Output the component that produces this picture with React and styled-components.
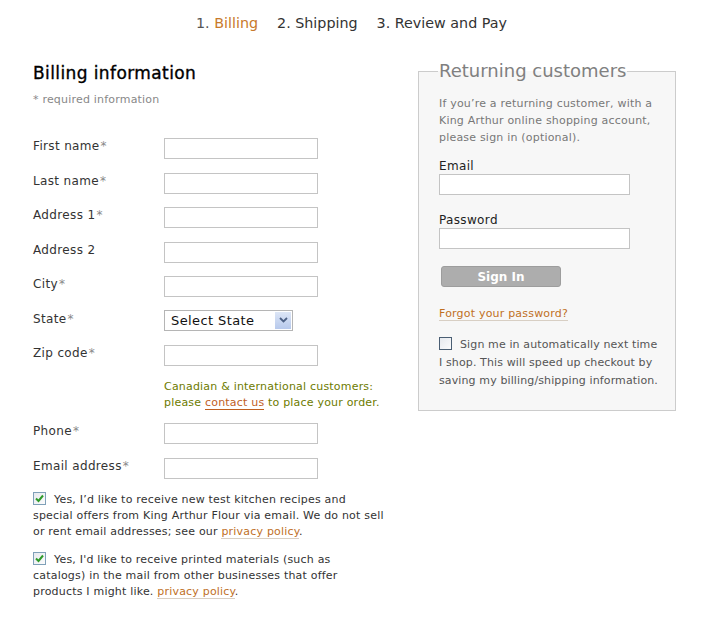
import React from "react"
import styled, { createGlobalStyle } from "styled-components"

const Global = createGlobalStyle`
  body {
    margin: 0;
    background: #fff;
    font-family: "DejaVu Sans", Verdana, sans-serif;
    color: #333;
  }
`

const Page = styled.div`
  width: 703px;
  height: 622px;
  overflow: hidden;
`

const Steps = styled.ol`
  list-style: none;
  margin: 0;
  padding: 14px 0 0 196px;
  display: flex;
  gap: 19px;
  font-size: 14.3px;
  line-height: 18px;
  color: #333;
`

const Step = styled.li`
  color: ${p => (p.active ? "#c8792b" : "#333")};
  span {
    color: #555;
  }
`

const Columns = styled.div`
  display: flex;
  padding: 0 0 0 33px;
  margin-top: 29px;
`

const Left = styled.div`
  width: 360px;
`

const Heading = styled.h2`
  margin: 2px 0 0;
  font-size: 17px;
  font-weight: normal;
  -webkit-text-stroke: 0.35px #000;
  letter-spacing: 0.4px;
  line-height: 20px;
  color: #000;
`

const Hint = styled.div`
  margin-top: 10px;
  font-size: 11px;
  color: #888;
  line-height: 14px;
  letter-spacing: 0.2px;
`

const Rows = styled.div`
  margin-top: 31px;
`

const Row = styled.div`
  display: flex;
  align-items: flex-start;
  height: ${p => p.h || 34.5}px;
`

const Label = styled.label`
  width: 131px;
  font-size: 12px;
  line-height: 15px;
  color: #333;
  padding-top: 1px;
  letter-spacing: 0.35px;
  span {
    color: #888;
    margin-left: 1px;
  }
`

const Input = styled.input`
  box-sizing: border-box;
  width: ${p => p.w || 154}px;
  height: 21px;
  border: 1px solid #c4c4c4;
  background: #fff;
  margin: 0;
  padding: 0 3px;
  display: block;
`

const SelectBox = styled.div`
  box-sizing: border-box;
  width: 129px;
  height: 21px;
  border: 1px solid #b5b5b5;
  display: flex;
  align-items: center;
  justify-content: space-between;
  padding: 0 1px 0 6px;
  font-size: 13px;
  letter-spacing: 0.4px;
  color: #111;
  background: #fff;
  margin-top: -1px;
`

const Arrow = styled.span`
  width: 16px;
  height: 17px;
  background: linear-gradient(#dde6f6, #b7c9ec);
  display: flex;
  align-items: center;
  justify-content: center;
`

const Note = styled.div`
  margin: -2px 0 0 131px;
  height: 44px;
  font-size: 11px;
  line-height: 16px;
  letter-spacing: 0.2px;
  color: #6d7b00;
`

const Link = styled.a`
  color: ${p => p.color || "#c0701f"};
  text-decoration: none;
  border-bottom: 1px solid ${p => p.line || "#d8cfc4"};
`

const Opt = styled.p`
  margin: ${p => p.mt || 0}px 0 0;
  width: 353px;
  font-size: 11px;
  line-height: 16px;
  letter-spacing: 0.2px;
  color: #333;
`

const Box = styled.span`
  display: inline-block;
  vertical-align: -2px;
  width: 11px;
  height: 11px;
  border: 1px solid ${p => (p.checked ? "#7fa0b8" : "#4a5e73")};
  background: linear-gradient(135deg, #e6e9ee, #fbfbfc);
  margin-right: 8px;
  position: relative;
  svg {
    position: absolute;
    left: 1px;
    top: 1px;
  }
`

const Fieldset = styled.fieldset`
  box-sizing: border-box;
  width: 258px;
  height: 351px;
  margin: -1px 0 0 25px;
  padding: 0 12px 0 20px;
  border: 1px solid #ccc;
  background: #f7f7f7;
`

const Legend = styled.legend`
  font-size: 18px;
  line-height: 22px;
  color: #808080;
  padding: 0 1px;
  margin-left: -1px;
`

const Intro = styled.p`
  margin: 13px 0 0;
  font-size: 11px;
  line-height: 17px;
  letter-spacing: 0.2px;
  color: #777;
`

const FieldLabel = styled.div`
  margin-top: ${p => p.mt}px;
  font-size: 12px;
  line-height: 15px;
  letter-spacing: 0.35px;
  color: #222;
`

const SignIn = styled.button`
  margin: 17px 0 0 2px;
  width: 120px;
  height: 21px;
  border: 1px solid #9d9d9d;
  border-radius: 3px;
  background: #adadad;
  color: #fff;
  font-family: "DejaVu Sans", Verdana, sans-serif;
  font-weight: bold;
  font-size: 12px;
  padding: 0;
  display: block;
`

const Forgot = styled.div`
  margin-top: 20px;
  font-size: 11px;
  line-height: 14px;
  letter-spacing: 0.2px;
`

const Remember = styled.p`
  margin: 15px 0 0;
  font-size: 11px;
  line-height: 18px;
  color: #555;
  letter-spacing: 0.12px;
`

const Check = ({ checked }) => (
  <Box checked={checked}>
    {checked && (
      <svg width="9" height="9" viewBox="0 0 9 9">
        <path d="M1 4.5 L3.5 7 L8 1.5" stroke="#2f9a2a" strokeWidth="2" fill="none" />
      </svg>
    )}
  </Box>
)

const Field = ({ label, req = true, h }) => (
  <Row h={h}>
    <Label>
      {label}
      {req && <span>*</span>}
    </Label>
    <Input />
  </Row>
)

export default function App() {
  return (
    <Page>
      <Global />
      <Steps>
        <Step active>
          <span>1. </span>Billing
        </Step>
        <Step>2. Shipping</Step>
        <Step>3. Review and Pay</Step>
      </Steps>
      <Columns>
        <Left>
          <Heading>Billing information</Heading>
          <Hint>* required information</Hint>
          <Rows>
            <Field label="First name" />
            <Field label="Last name" />
            <Field label="Address 1" />
            <Field label="Address 2" req={false} />
            <Field label="City" />
            <Row>
              <Label>
                State<span>*</span>
              </Label>
              <SelectBox>
                Select State
                <Arrow>
                  <svg width="9" height="6" viewBox="0 0 9 6">
                    <path d="M1 1 L4.5 4.5 L8 1" stroke="#4d6185" strokeWidth="1.8" fill="none" />
                  </svg>
                </Arrow>
              </SelectBox>
            </Row>
            <Field label="Zip code" h={36} />
            <Note>
              Canadian &amp; international customers:
              <br />
              please{" "}
              <Link color="#c0601f" line="#c0601f">
                contact us
              </Link>{" "}
              to place your order.
            </Note>
            <Field label="Phone" />
            <Field label="Email address" h={34} />
          </Rows>
          <Opt>
            <Check checked />
            Yes, I’d like to receive new test kitchen recipes and special offers from King Arthur
            Flour via email. We do not sell or rent email addresses; see our{" "}
            <Link>privacy policy</Link>.
          </Opt>
          <Opt mt={12}>
            <Check checked />
            Yes, I'd like to receive printed materials (such as catalogs) in the mail from other
            businesses that offer products I might like. <Link>privacy policy</Link>.
          </Opt>
        </Left>
        <Fieldset>
          <Legend>Returning customers</Legend>
          <Intro>
            If you’re a returning customer, with a King Arthur online shopping account, please
            sign in (optional).
          </Intro>
          <FieldLabel mt={13}>Email</FieldLabel>
          <Input w={191} />
          <FieldLabel mt={18}>Password</FieldLabel>
          <Input w={191} />
          <SignIn>Sign In</SignIn>
          <Forgot>
            <Link>Forgot your password?</Link>
          </Forgot>
          <Remember>
            <Check />
            Sign me in automatically next time I shop. This will speed up checkout by saving my
            billing/shipping information.
          </Remember>
        </Fieldset>
      </Columns>
    </Page>
  )
}
